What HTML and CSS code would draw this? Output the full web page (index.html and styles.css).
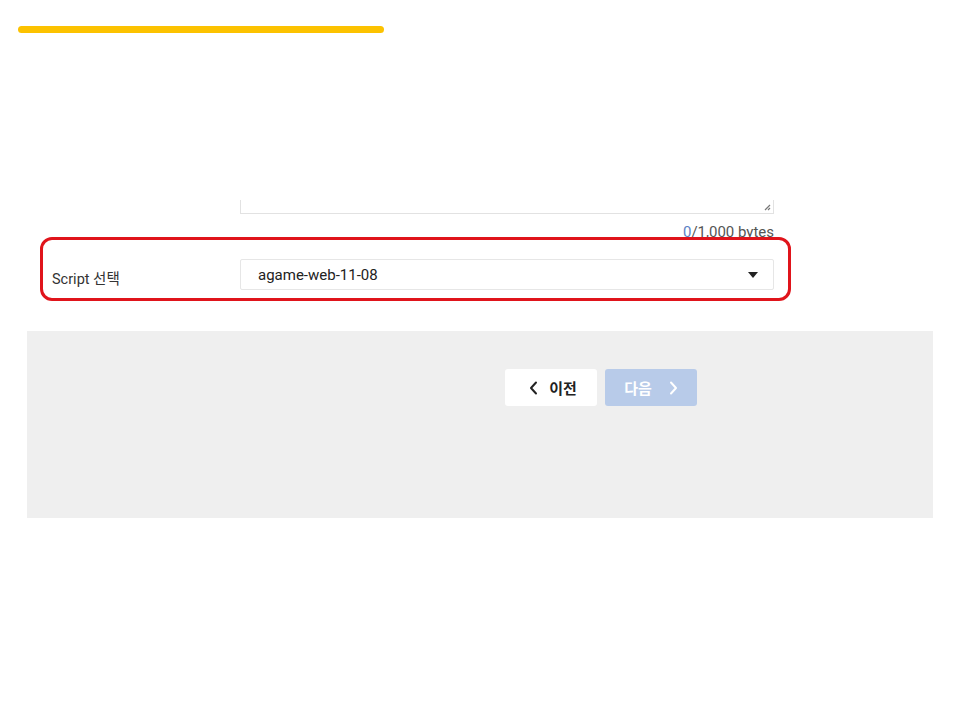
FILE: index.html
```html
<!DOCTYPE html>
<html lang="ko">
<head>
<meta charset="utf-8">
<title>Script 선택</title>
<link rel="stylesheet" href="styles.css">
</head>
<body>
<div class="progress"></div>

<div class="form">
  <div class="field-row textarea-row">
    <div class="textarea-tail">
      <svg class="resize" width="8" height="8" viewBox="0 0 8 8"><path d="M7 2 L2 7 M7 5 L5 7" stroke="#777" stroke-width="1.2" fill="none"/></svg>
    </div>
  </div>
  <div class="count"><span class="count-now">0</span>/1,000 bytes</div>
  <div class="select-row">
    <label class="label">Script 선택</label>
    <div class="select">
      <span class="select-value">agame-web-11-08</span>
      <svg class="caret" width="10" height="6" viewBox="0 0 10 6"><path d="M0 0 H10 L5 6 Z" fill="#222"/></svg>
    </div>
  </div>
  <div class="highlight"></div>
</div>

<div class="panel">
  <div class="buttons">
    <button class="btn btn-prev">
      <svg width="9" height="14" viewBox="0 0 9 14"><path d="M7 1.5 L2 7 L7 12.5" stroke="#222" stroke-width="2" fill="none" stroke-linecap="round" stroke-linejoin="round"/></svg>
      <span>이전</span>
    </button>
    <button class="btn btn-next">
      <span>다음</span>
      <svg width="9" height="14" viewBox="0 0 9 14"><path d="M2 1.5 L7 7 L2 12.5" stroke="#fff" stroke-width="2" fill="none" stroke-linecap="round" stroke-linejoin="round"/></svg>
    </button>
  </div>
</div>
</body>
</html>
```

FILE: styles.css
```css
html, body {
  margin: 0;
  padding: 0;
  background: #fff;
  font-family: Roboto, "Noto Sans CJK KR", "Noto Sans", sans-serif;
  color: #222;
}

.progress {
  margin: 26px 0 0 18px;
  width: 366px;
  height: 7px;
  border-radius: 4px;
  background: #fcc200;
}

.form {
  position: relative;
  margin-top: 167px;
  width: 960px;
}

.textarea-row {
  padding-left: 240px;
}

.textarea-tail {
  position: relative;
  width: 532px;
  height: 13px;
  border: 1px solid #e2e2e2;
  border-top: none;
}

.resize {
  position: absolute;
  right: 2px;
  bottom: 2px;
}

.count {
  margin-top: 9px;
  width: 774px;
  text-align: right;
  font-size: 15px;
  line-height: 18px;
  color: #555;
}

.count-now {
  color: #5b7fc4;
}

.select-row {
  display: flex;
  align-items: center;
  margin-top: 18px;
}

.label {
  width: 188px;
  padding-left: 52px;
  padding-top: 5px;
  font-size: 14.5px;
  color: #333;
}

.select {
  display: flex;
  align-items: center;
  justify-content: space-between;
  box-sizing: border-box;
  width: 534px;
  height: 31px;
  padding: 0 15px 0 17px;
  border: 1px solid #e6e6e6;
  border-radius: 2px;
}

.select-value {
  font-size: 15px;
  color: #222;
}

.highlight {
  position: absolute;
  left: 40px;
  top: 37px;
  width: 745px;
  height: 58px;
  border: 3px solid #e0141b;
  border-radius: 12px;
}

.panel {
  margin: 41px 0 0 27px;
  width: 906px;
  height: 187px;
  background: #efefef;
}

.buttons {
  display: flex;
  gap: 8px;
  padding: 38px 0 0 478px;
}

.btn {
  display: flex;
  align-items: center;
  justify-content: center;
  width: 92px;
  height: 37px;
  border: none;
  border-radius: 3px;
  font-family: "Noto Sans CJK KR", "Noto Sans", sans-serif;
  font-size: 15px;
  font-weight: 700;
  padding: 0;
}

.btn-prev {
  background: #fff;
  color: #222;
  gap: 11px;
  padding-left: 4px;
}

.btn-next {
  background: #b8cbe9;
  color: #fff;
  gap: 17px;
}
```
